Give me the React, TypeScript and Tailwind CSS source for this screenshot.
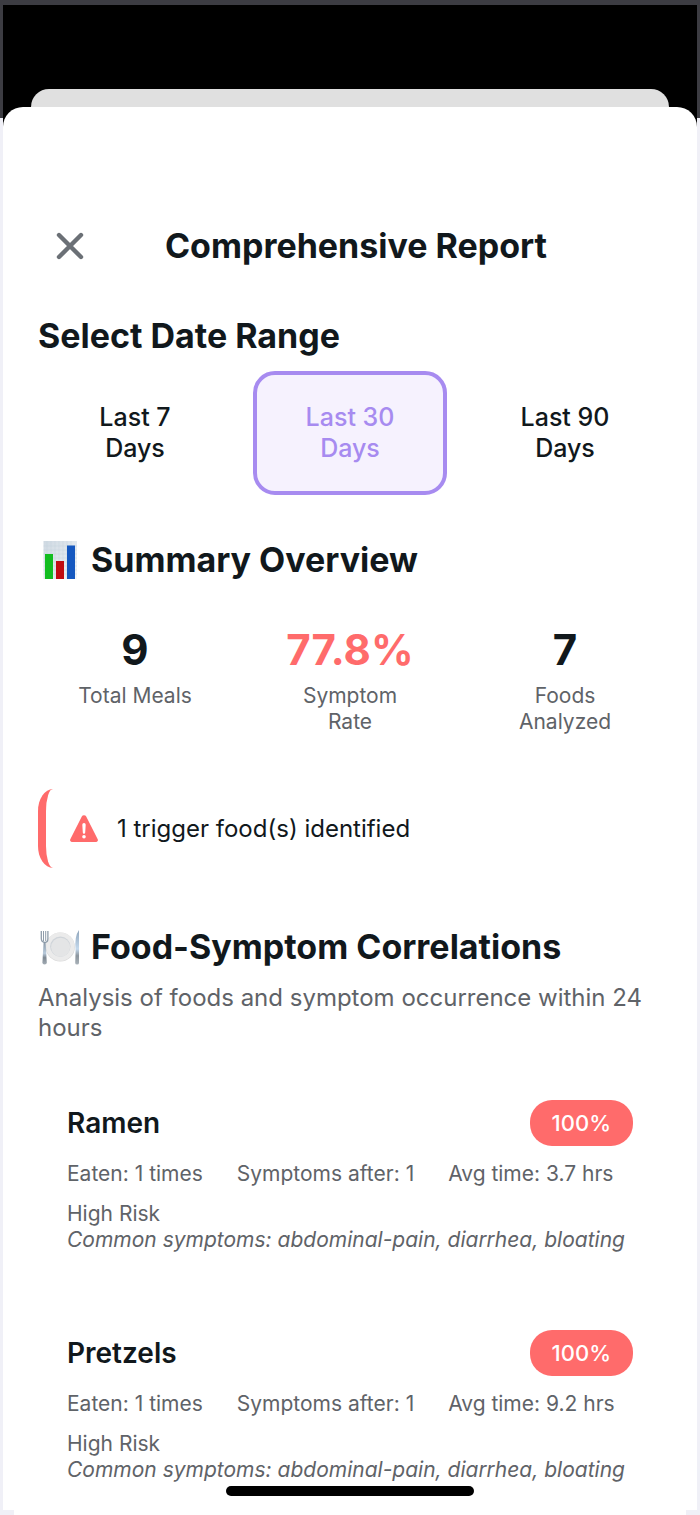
import React, { useState } from 'react';

interface FoodCorrelation {
  name: string;
  rate: string;
  eaten: number;
  symptomsAfter: number;
  avgTime: string;
  risk: string;
  symptoms: string[];
}

const RANGES = [
  { days: 7, label: 'Last 7' },
  { days: 30, label: 'Last 30' },
  { days: 90, label: 'Last 90' },
];

const FOODS: FoodCorrelation[] = [
  { name: 'Ramen', rate: '100%', eaten: 1, symptomsAfter: 1, avgTime: '3.7', risk: 'High Risk', symptoms: ['abdominal-pain', 'diarrhea', 'bloating'] },
  { name: 'Pretzels', rate: '100%', eaten: 1, symptomsAfter: 1, avgTime: '9.2', risk: 'High Risk', symptoms: ['abdominal-pain', 'diarrhea', 'bloating'] },
];

const CloseIcon = () => (
  <svg width="28" height="28" viewBox="0 0 28 28" fill="none" stroke="#6b7076" strokeWidth="4.4" strokeLinecap="round">
    <path d="M3 3 25 25M25 3 3 25" />
  </svg>
);

const WarningIcon = () => (
  <svg width="30" height="28" viewBox="0 0 30 28">
    <path d="M12.8 1.6a2.4 2.4 0 0 1 4.4 0L28.7 24.2a1.9 1.9 0 0 1-1.7 2.8H3a1.9 1.9 0 0 1-1.7-2.8Z" fill="#ff6b6b" />
    <path d="M13.3 9.8a1.7 1.7 0 0 1 3.4 0l-.5 7.8a1.2 1.2 0 0 1-2.4 0Z" fill="#fff" />
    <circle cx="15" cy="21.8" r="1.8" fill="#fff" />
  </svg>
);

const ChartIcon = () => (
  <svg width="42" height="40" viewBox="0 0 42 40">
    <defs>
      <linearGradient id="chart-paper" x1="0" y1="0" x2="1" y2="1">
        <stop offset="0" stopColor="#cfd9e2" />
        <stop offset="1" stopColor="#f3f6f9" />
      </linearGradient>
    </defs>
    <rect x="5.5" y="1" width="33.5" height="38" fill="url(#chart-paper)" />
    <path d="M9 1v38M13 1v38M17 1v38M21 1v38M25 1v38M29 1v38M33 1v38M5.5 6H39M5.5 10H39M5.5 14H39M5.5 18H39M5.5 22H39M5.5 26H39M5.5 30H39M5.5 34H39" stroke="#c3d0dc" strokeWidth=".4" />
    <rect x="7" y="14" width="8" height="25" fill="#12bd20" />
    <rect x="18" y="21" width="8" height="18" fill="#c10d12" />
    <rect x="29" y="5.5" width="8" height="33.5" fill="#1558c0" />
  </svg>
);

const PlateIcon = () => (
  <svg width="42" height="40" viewBox="0 0 42 40">
    <defs>
      <linearGradient id="cutlery" x1="0" y1="0" x2="0" y2="1">
        <stop offset="0" stopColor="#8795a3" />
        <stop offset=".5" stopColor="#b9cbdc" />
        <stop offset=".7" stopColor="#7d8791" />
        <stop offset="1" stopColor="#a3adb5" />
      </linearGradient>
      <linearGradient id="blade" x1="0" y1="0" x2="0" y2="1">
        <stop offset="0" stopColor="#8fa5bb" />
        <stop offset=".55" stopColor="#c4d9ed" />
        <stop offset=".75" stopColor="#8b949c" />
        <stop offset="1" stopColor="#a9b2b9" />
      </linearGradient>
    </defs>
    <circle cx="22.3" cy="20" r="14.6" fill="#d9d9d9" />
    <circle cx="22.3" cy="19.6" r="14.2" fill="#ebebeb" />
    <circle cx="22.3" cy="19.6" r="10.2" fill="#cfd4d9" />
    <circle cx="22.6" cy="20.2" r="9.5" fill="#e4e5e6" />
    <path d="M3.3 4v7.5q0 3.5 3.3 3.8t3.3-3.8V4" fill="none" stroke="#8f9daa" strokeWidth="1.3" />
    <path d="M5.5 4v10M7.7 4v10" stroke="#8f9daa" strokeWidth="1" />
    <path d="M5.6 15h2l1.2 20.5q0 2-2.2 2t-2.2-2Z" fill="url(#cutlery)" />
    <path d="M41 3v33q0 1.5-1.9 1.5t-1.9-1.5l.4-12.5Q36.2 9.5 41 3Z" fill="url(#blade)" />
  </svg>
);

const Stat = ({ value, label, alert }: { value: string; label: React.ReactNode; alert?: boolean }) => (
  <div className="text-center">
    <p className={`text-[42px] leading-14 font-bold ${alert ? 'text-[#ff6b6b]' : 'text-[#11181c]'}`}>{value}</p>
    <p className="mt-[5px] px-8 text-[21px] leading-[26px] text-[#5f6368]">{label}</p>
  </div>
);

const FoodCard = ({ food }: { food: FoodCorrelation }) => (
  <li className="px-[29px] pt-7 pb-[27px] text-[21px] leading-[26px] text-[#5f6368]">
    <div className="flex items-center justify-between">
      <h3 className="text-[28px] leading-9 font-semibold text-[#11181c]">{food.name}</h3>
      <span className="rounded-[22px] bg-[#ff6b6b] px-[22px] py-[10px] text-[22px] font-medium text-white">{food.rate}</span>
    </div>
    <div className="mt-[15px] flex gap-[34px] whitespace-nowrap">
      <span>Eaten: {food.eaten} times</span>
      <span>Symptoms after: {food.symptomsAfter}</span>
      <span>Avg time: {food.avgTime} hrs</span>
    </div>
    <p className="mt-[14px]">{food.risk}</p>
    <p className="whitespace-nowrap italic">Common symptoms: {food.symptoms.join(', ')}</p>
  </li>
);

export default function App() {
  const [range, setRange] = useState(30);

  return (
    <div className="relative bg-[linear-gradient(#3c3c42_118px,#f0f0f7_118px)] px-[3px] pt-[5px] font-['Inter','Liberation_Sans',sans-serif] text-[#11181c]">
      <div className="bg-[linear-gradient(#000_150px,transparent_150px)] pt-[84px]">
        <div className="mx-7 h-[18px] rounded-t-[18px] bg-[#e0e0e0]" />

        <main className="rounded-t-[20px] bg-white px-[35px] pt-[111px]">
          <header className="grid grid-cols-[64px_1fr_52px] items-center">
            <button aria-label="Close" className="flex h-14 w-16 items-center justify-center">
              <CloseIcon />
            </button>
            <h1 className="text-center text-[34px] leading-11 font-bold">Comprehensive Report</h1>
          </header>

          <section className="mt-10">
            <h2 className="text-[34px] leading-11 font-bold">Select Date Range</h2>
            <div className="mt-[13px] grid grid-cols-3 gap-[21px]">
              {RANGES.map((r) => (
                <button
                  key={r.days}
                  onClick={() => setRange(r.days)}
                  aria-pressed={range === r.days}
                  className={`rounded-[22px] border-4 py-[27px] text-[25px] leading-[31px] font-medium ${
                    range === r.days
                      ? 'border-[#a78bf0] bg-[#f6f2fe] text-[#a78bf0]'
                      : 'border-transparent text-[#11181c]'
                  }`}
                >
                  {r.label}
                  <br />
                  Days
                </button>
              ))}
            </div>
          </section>

          <section className="mt-[43px]">
            <h2 className="flex items-center gap-[11px] text-[34px] leading-11 font-bold">
              <ChartIcon />
              Summary Overview
            </h2>
            <div className="mt-10 grid grid-cols-3 gap-[21px]">
              <Stat value="9" label="Total Meals" />
              <Stat value="77.8%" label="Symptom Rate" alert />
              <Stat value="7" label="Foods Analyzed" />
            </div>
          </section>

          <div role="alert" className="mt-[54px] flex h-[79px] items-center gap-[18px] rounded-[15px/22px] border-l-8 border-[#ff6b6b] pl-[23px]">
            <WarningIcon />
            <p className="text-[24px] leading-[31px]">1 trigger food(s) identified</p>
          </div>

          <section className="mt-[57px]">
            <h2 className="flex items-center gap-[11px] text-[34px] leading-11 font-bold">
              <PlateIcon />
              Food-Symptom Correlations
            </h2>
            <p className="mt-[14px] text-[24px] leading-[30px] text-[#5f6368]">
              Analysis of foods and symptom occurrence within 24 hours
            </p>
            <ul className="mt-[29px] flex flex-col gap-[22px]">
              {FOODS.map((food) => (
                <FoodCard key={food.name} food={food} />
              ))}
            </ul>
          </section>
        </main>
        <div className="mx-[11px] h-[5px] bg-white" />
      </div>

      {/* home indicator */}
      <div className="absolute bottom-[19px] left-1/2 h-[10px] w-[248px] -translate-x-1/2 rounded-full bg-black" />
    </div>
  );
}
